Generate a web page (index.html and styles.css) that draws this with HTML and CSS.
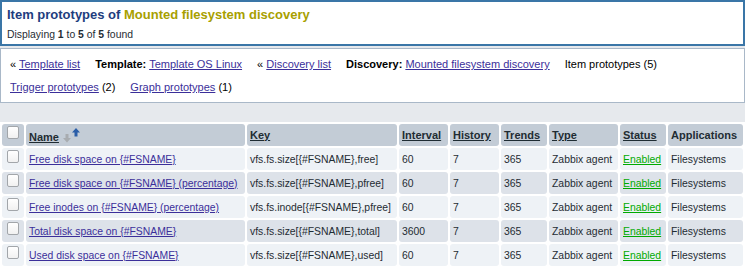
FILE: index.html
```html
<!DOCTYPE html>
<html lang="en">
<head>
    <meta charset="UTF-8">
    <title>Item prototypes</title>
    <link rel="stylesheet" href="styles.css">
</head>
<body>
    <div class="header-box">
        <div class="page-title">Item prototypes of <span class="discovery-name">Mounted filesystem discovery</span></div>
        <div class="paging">Displaying <b>1</b> to <b>5</b> of <b>5</b> found</div>
    </div>

    <div class="nav-box">
        <span>« <a href="#">Template list</a></span>
        <span><b>Template:</b> <a href="#">Template OS Linux</a></span>
        <span>« <a href="#">Discovery list</a></span>
        <span><b>Discovery:</b> <a href="#">Mounted filesystem discovery</a></span>
        <span>Item prototypes (5)</span>
        <span><a href="#">Trigger prototypes</a> (2)</span>
        <span><a href="#">Graph prototypes</a> (1)</span>
    </div>

    <table class="list-table">
        <thead>
            <tr>
                <th class="col-check"><span class="checkbox"></span></th>
                <th class="col-name">
                    <a href="#">Name</a><svg class="sort-icon" width="18" height="15" viewBox="0 0 18 15">
                        <path d="M2.5 6 h3 v4 h2.5 l-4 4.5 l-4 -4.5 h2.5 z" fill="#a8acb0"/>
                        <path d="M11.5 8.5 h3 v-4 h2.5 l-4 -4.5 l-4 4.5 h2.5 z" fill="#2b5ea8"/>
                    </svg>
                </th>
                <th class="col-key"><a href="#">Key</a></th>
                <th class="col-interval"><a href="#">Interval</a></th>
                <th class="col-history"><a href="#">History</a></th>
                <th class="col-trends"><a href="#">Trends</a></th>
                <th class="col-type"><a href="#">Type</a></th>
                <th class="col-status"><a href="#">Status</a></th>
                <th class="col-apps">Applications</th>
            </tr>
        </thead>
        <tbody>
            <tr>
                <td><span class="checkbox"></span></td>
                <td><a href="#">Free disk space on {#FSNAME}</a></td>
                <td>vfs.fs.size[{#FSNAME},free]</td>
                <td>60</td>
                <td>7</td>
                <td>365</td>
                <td>Zabbix agent</td>
                <td><a href="#" class="enabled">Enabled</a></td>
                <td>Filesystems</td>
            </tr>
            <tr>
                <td><span class="checkbox"></span></td>
                <td><a href="#">Free disk space on {#FSNAME} (percentage)</a></td>
                <td>vfs.fs.size[{#FSNAME},pfree]</td>
                <td>60</td>
                <td>7</td>
                <td>365</td>
                <td>Zabbix agent</td>
                <td><a href="#" class="enabled">Enabled</a></td>
                <td>Filesystems</td>
            </tr>
            <tr>
                <td><span class="checkbox"></span></td>
                <td><a href="#">Free inodes on {#FSNAME} (percentage)</a></td>
                <td>vfs.fs.inode[{#FSNAME},pfree]</td>
                <td>60</td>
                <td>7</td>
                <td>365</td>
                <td>Zabbix agent</td>
                <td><a href="#" class="enabled">Enabled</a></td>
                <td>Filesystems</td>
            </tr>
            <tr>
                <td><span class="checkbox"></span></td>
                <td><a href="#">Total disk space on {#FSNAME}</a></td>
                <td>vfs.fs.size[{#FSNAME},total]</td>
                <td>3600</td>
                <td>7</td>
                <td>365</td>
                <td>Zabbix agent</td>
                <td><a href="#" class="enabled">Enabled</a></td>
                <td>Filesystems</td>
            </tr>
            <tr>
                <td><span class="checkbox"></span></td>
                <td><a href="#">Used disk space on {#FSNAME}</a></td>
                <td>vfs.fs.size[{#FSNAME},used]</td>
                <td>60</td>
                <td>7</td>
                <td>365</td>
                <td>Zabbix agent</td>
                <td><a href="#" class="enabled">Enabled</a></td>
                <td>Filesystems</td>
            </tr>
        </tbody>
    </table>
</body>
</html>
```

FILE: styles.css
```css
* {
    box-sizing: border-box;
}
body {
    margin: 0;
    background: #e6e9ed;
    font-family: 'Liberation Sans', Arial, sans-serif;
    font-size: 11px;
    color: #1f2c33;
}
a {
    color: #3b2f9a;
    text-decoration: underline;
}
.header-box {
    height: 46px;
    background: white;
    border: 2px solid #3a76a7;
    padding: 4px 5px;
}
.page-title {
    font-size: 13px;
    font-weight: bold;
    color: #1e3d7e;
    line-height: 17px;
}
.discovery-name {
    color: #a8a000;
}
.paging {
    margin-top: 5px;
    font-size: 10.4px;
    line-height: 14px;
}
.nav-box {
    margin-top: 2px;
    height: 55px;
    background: white;
    border: 1px solid #a9b8c8;
    padding: 4px 9px;
    display: flex;
    flex-wrap: wrap;
    column-gap: 15px;
    line-height: 23px;
    color: #000;
}
.list-table {
    margin-top: 19px;
    width: 745px;
    table-layout: fixed;
    border-spacing: 2px;
    background: white;
}
.list-table th,
.list-table td {
    height: 22px;
    padding: 0 3px;
    border-radius: 3px;
    text-align: left;
    white-space: nowrap;
    overflow: hidden;
    vertical-align: middle;
}
.list-table td {
    font-size: 10.4px;
}
.list-table th {
    background: #c3ccd6;
    font-weight: bold;
}
.list-table th a {
    color: #1f2c33;
}
.list-table tbody tr:nth-child(odd) td {
    background: #eef2f6;
}
.list-table tbody tr:nth-child(even) td {
    background: #dde2e9;
}
.col-check { width: 22px; }
.col-name { width: 219px; }
.col-key { width: 150px; }
.col-interval { width: 49px; }
.col-history { width: 49px; }
.col-trends { width: 46px; }
.col-type { width: 69px; }
.col-status { width: 46px; }
.col-apps { width: 75px; }
.list-table th.col-check,
.list-table td:first-child {
    padding: 2px 0 0 5px;
    vertical-align: top;
}
.checkbox {
    display: block;
    width: 12px;
    height: 13px;
    border: 1px solid #a2a6aa;
    border-radius: 2px;
    background: linear-gradient(#ffffff, #f1f1f1);
}
.sort-icon {
    vertical-align: -2px;
    margin-left: 4px;
}
.enabled {
    color: #00aa00;
}
```
